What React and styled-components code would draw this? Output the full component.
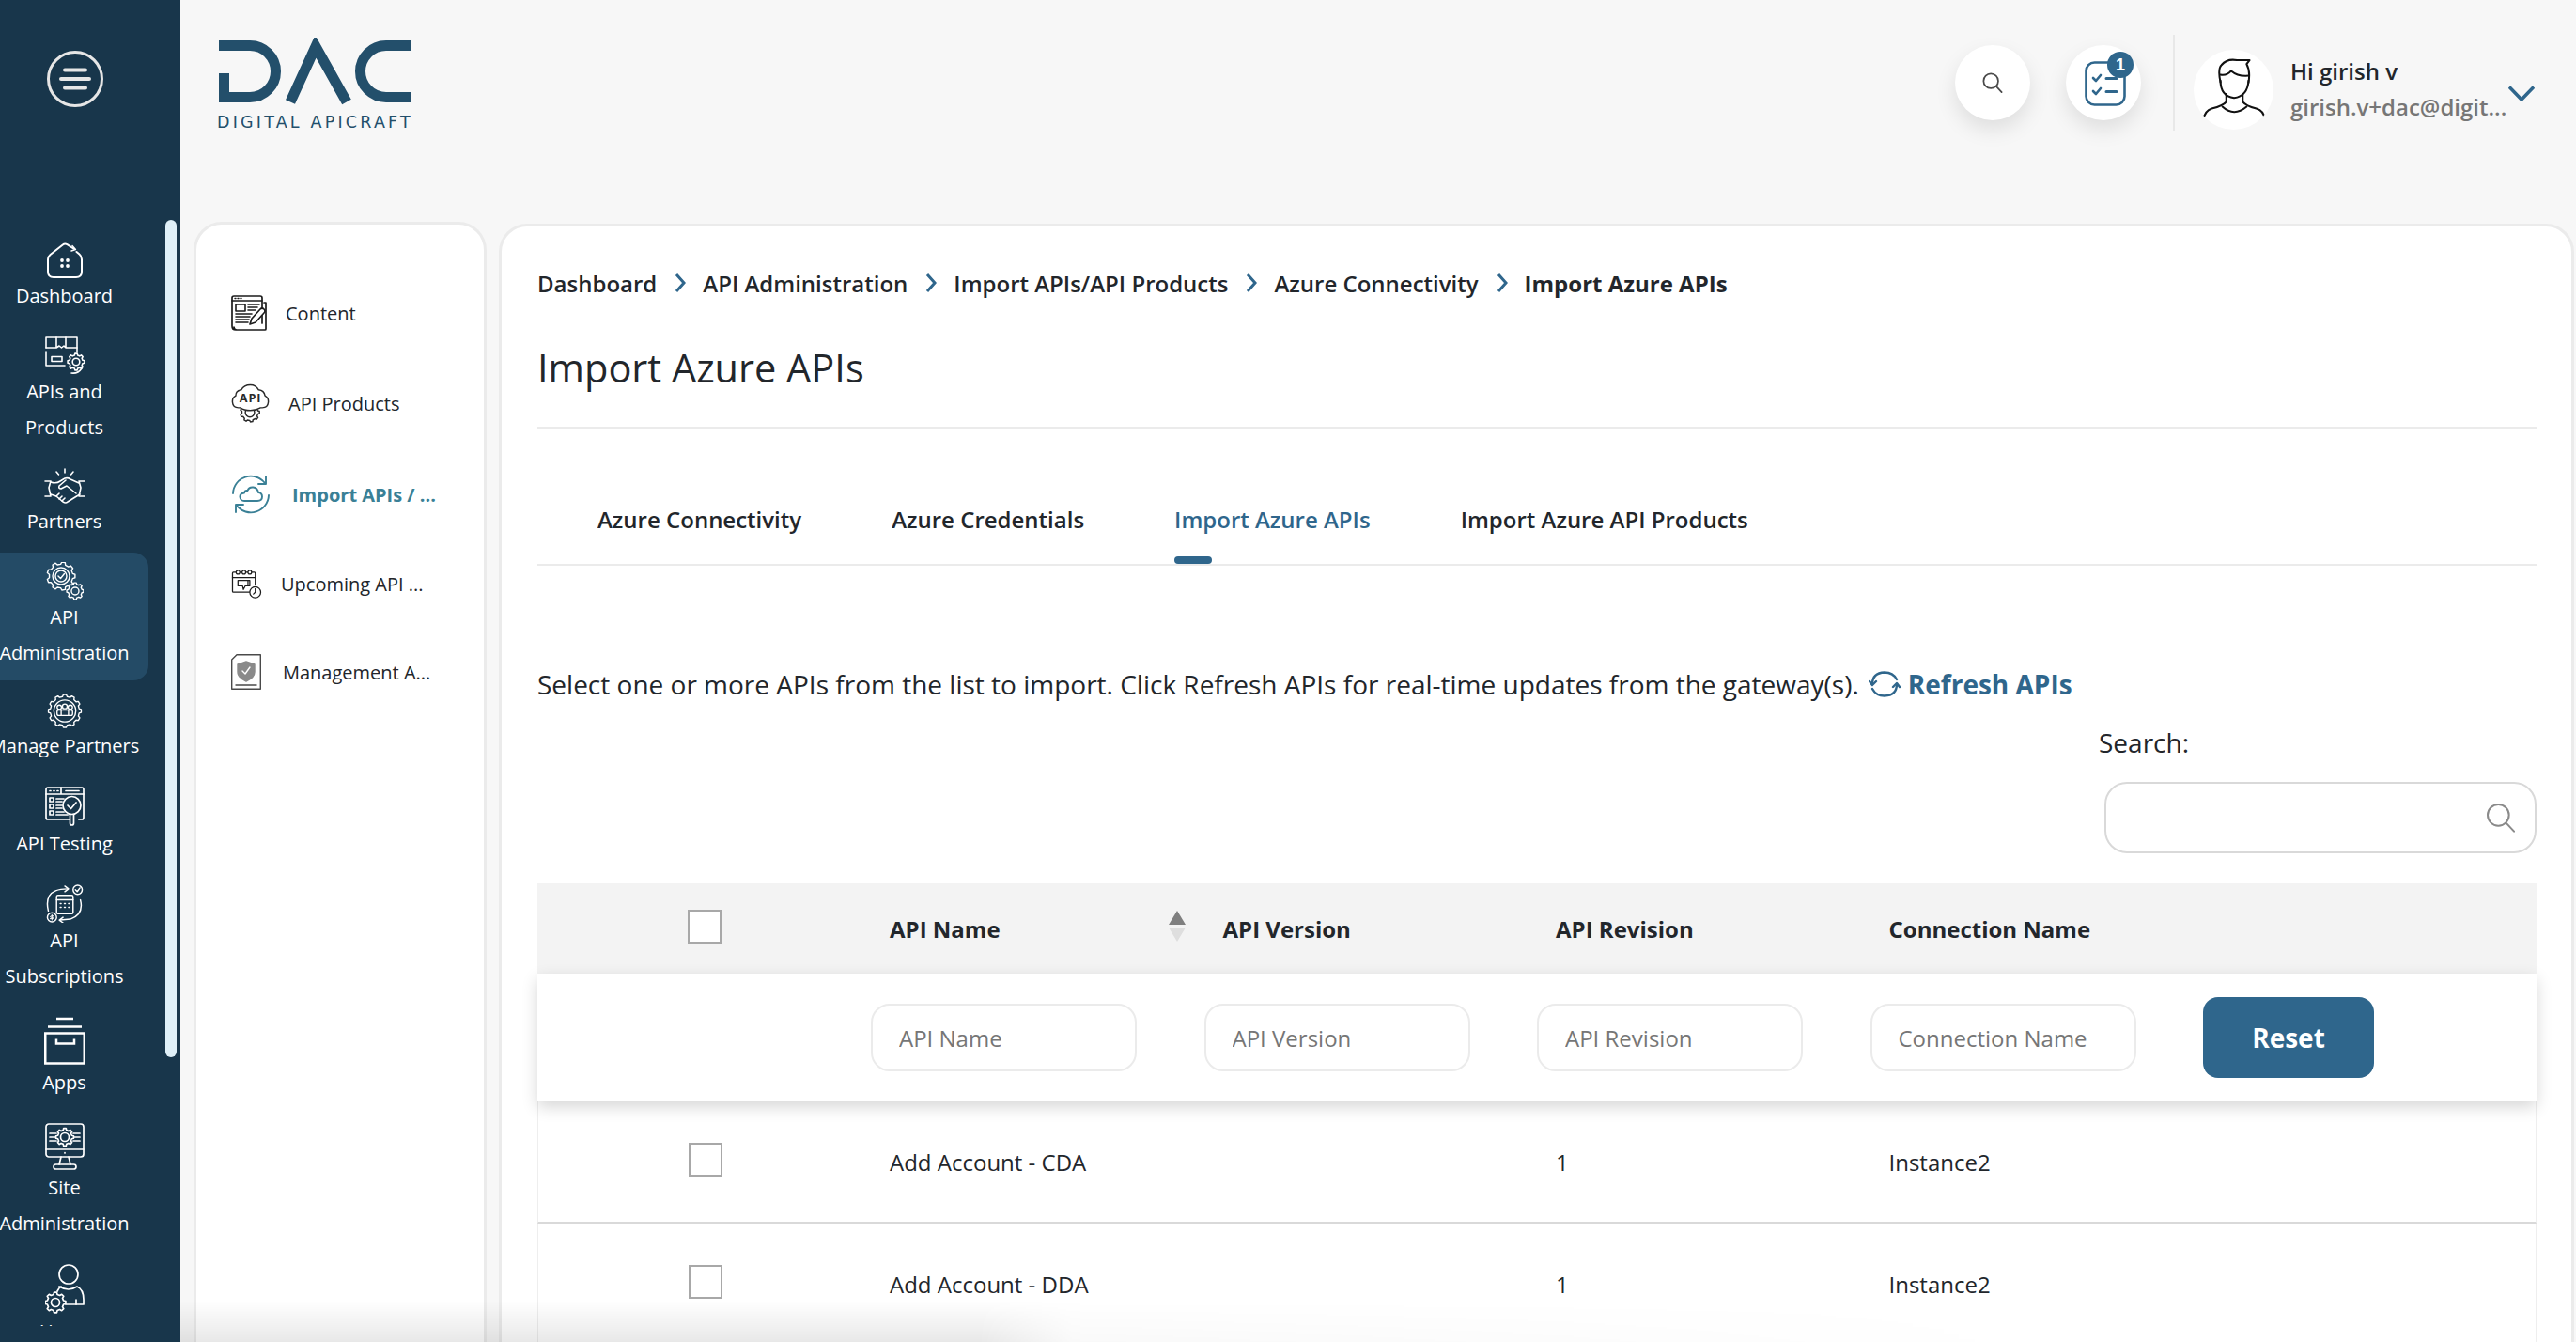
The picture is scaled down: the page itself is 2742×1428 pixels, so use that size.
import React from "react";
import styled, { createGlobalStyle } from "styled-components";

const COLORS = {
  navy: "#18364b",
  navyActive: "#244b66",
  blue: "#2f668c",
  teal: "#3a8096",
  logo: "#234f6b",
  text: "#22262b",
  grey: "#767676",
  line: "#ebebeb",
};

const GlobalStyle = createGlobalStyle`
  * {
    box-sizing: border-box;
  }

  html,
  body {
    margin: 0;
    padding: 0;
    background: #f7f7f7;
    font-family: "Open Sans", "Noto Sans", sans-serif;
    color: ${COLORS.text};
  }
`;

const Page = styled.div`
  position: relative;
  display: flex;
  width: 2742px;
  height: 1428px;
  overflow: hidden;
  background: #f7f7f7;
`;

const Sidebar = styled.aside`
  position: relative;
  flex: 0 0 192px;
  display: flex;
  flex-direction: column;
  padding-top: 54px;
  background: ${COLORS.navy};
`;

const MenuButton = styled.button`
  align-self: flex-start;
  width: 60px;
  height: 60px;
  margin: 0 0 120px 50px;
  padding: 0;
  border: 0;
  background: none;
`;

const ScrollThumb = styled.div`
  position: absolute;
  top: 234px;
  left: 176px;
  width: 12px;
  height: 891px;
  border-radius: 6px;
  background: #dff0f8;
`;

const NavList = styled.nav`
  display: flex;
  flex-direction: column;
  gap: 4px;
  height: 1177px;
  padding-top: 14px;
  overflow: hidden;
`;

const NavItem = styled.a`
  flex: 0 0 auto;
  display: flex;
  flex-direction: column;
  align-items: center;
  width: 158px;
  padding: 10px 21px 10px 0;
  border-radius: 0 16px 16px 0;
  background: ${(props) => (props.$active ? COLORS.navyActive : "transparent")};
  color: #fff;

  svg {
    display: block;
    flex: 0 0 auto;
  }
`;

const NavLabel = styled.span`
  font-size: 20px;
  line-height: 38px;
  text-align: center;
  white-space: nowrap;
`;

const Main = styled.div`
  flex: 1;
  min-width: 0;
  display: flex;
  flex-direction: column;
`;

const Header = styled.header`
  flex: 0 0 236px;
  display: flex;
  justify-content: space-between;
  align-items: flex-start;
  padding: 40px 44px 0 39px;
`;

const Logo = styled.div`
  display: flex;
  flex-direction: column;
  width: 210px;
`;

const LogoName = styled.span`
  margin-top: 8px;
  font-family: "DejaVu Sans", "Open Sans", sans-serif;
  font-size: 17.5px;
  line-height: 20px;
  letter-spacing: 3.2px;
  white-space: nowrap;
  color: ${COLORS.logo};
`;

const HeaderRight = styled.div`
  display: flex;
  align-items: center;
  height: 102px;
  margin-top: -3px;
`;

const RoundButton = styled.button`
  position: relative;
  display: flex;
  align-items: center;
  justify-content: center;
  width: 80px;
  height: 80px;
  margin-right: ${(props) => props.$gap}px;
  padding: 0;
  border: 0;
  border-radius: 50%;
  background: #fff;
  box-shadow: 0 10px 22px rgba(0, 0, 0, 0.1);
`;

const Badge = styled.span`
  position: absolute;
  top: 7px;
  right: 8px;
  width: 28px;
  height: 28px;
  border-radius: 50%;
  background: ${COLORS.blue};
  color: #fff;
  font-size: 18px;
  line-height: 28px;
  font-weight: 700;
  text-align: center;
`;

const HeaderDivider = styled.div`
  width: 2px;
  height: 102px;
  margin-right: 20px;
  background: #e8e8e8;
`;

const UserBlock = styled.div`
  display: flex;
  align-items: center;
  margin-top: 14px;
`;

const Avatar = styled.div`
  display: flex;
  align-items: center;
  justify-content: center;
  width: 85px;
  height: 85px;
  margin-right: 18px;
  border-radius: 50%;
  background: #fff;
  overflow: hidden;
`;

const UserText = styled.div`
  width: 232px;
`;

const UserName = styled.div`
  font-size: 24px;
  line-height: 38px;
  font-weight: 600;
`;

const UserEmail = styled.div`
  font-size: 24px;
  line-height: 38px;
  font-weight: 600;
  color: ${COLORS.grey};
  white-space: nowrap;
`;

const Chevron = styled.svg`
  margin-top: 8px;
`;

const Body = styled.div`
  flex: 1;
  min-height: 0;
  display: flex;
  align-items: flex-start;
  gap: 13px;
  padding: 0 2px 0 14px;
`;

const SidePanel = styled.div`
  flex: 0 0 312px;
  display: flex;
  flex-direction: column;
  height: 100%;
  padding: 47px 0 0 37px;
  background: #fff;
  border: 3px solid ${COLORS.line};
  border-bottom: 0;
  border-radius: 30px 30px 0 0;
`;

const SideItem = styled.a`
  display: flex;
  align-items: center;
  gap: ${(props) => props.$gap}px;
  height: ${(props) => props.$height}px;
  font-size: 20px;
  font-weight: ${(props) => (props.$active ? 700 : 400)};
  color: ${(props) => (props.$active ? COLORS.teal : COLORS.text)};
  white-space: nowrap;

  svg {
    flex: 0 0 auto;
  }
`;

const Content = styled.section`
  flex: 1;
  min-width: 0;
  height: calc(100% - 2px);
  margin-top: 2px;
  padding: 42px 37px 0 38px;
  background: #fff;
  border: 3px solid ${COLORS.line};
  border-bottom: 0;
  border-radius: 30px 30px 0 0;
`;

const Breadcrumb = styled.div`
  display: flex;
  align-items: center;
  height: 36px;
  font-size: 24px;
  white-space: nowrap;
`;

const Crumb = styled.span`
  font-weight: ${(props) => (props.$current ? 700 : 600)};
`;

const CrumbArrow = styled.svg`
  margin: 0 18px 0 19px;
`;

const Title = styled.h1`
  margin: 45px 0 0;
  padding-bottom: 36px;
  border-bottom: 2px solid ${COLORS.line};
  font-size: 41.5px;
  line-height: 54px;
  font-weight: 500;
`;

const Tabs = styled.div`
  display: flex;
  height: 146px;
  padding: 80px 0 0 16px;
  border-bottom: 2px solid ${COLORS.line};
`;

const Tab = styled.a`
  position: relative;
  height: 64px;
  padding: 0 48px;
  font-size: 24px;
  line-height: 34px;
  font-weight: 600;
  white-space: nowrap;
  color: ${(props) => (props.$active ? COLORS.blue : COLORS.text)};

  &::after {
    content: "";
    display: ${(props) => (props.$active ? "block" : "none")};
    position: absolute;
    left: 48px;
    bottom: 0;
    width: 40px;
    height: 8px;
    border-radius: 4px;
    background: ${COLORS.blue};
  }
`;

const Intro = styled.div`
  display: flex;
  align-items: center;
  height: 40px;
  margin-top: 106px;
  font-size: 28px;
  white-space: nowrap;
`;

const RefreshLink = styled.a`
  display: flex;
  align-items: center;
  gap: 8px;
  margin-left: 10px;
  font-weight: 700;
  color: ${COLORS.blue};
`;

const SearchBlock = styled.div`
  display: flex;
  flex-direction: column;
  width: 466px;
  margin: 22px 0 0 auto;
`;

const SearchLabel = styled.label`
  font-size: 28px;
  line-height: 40px;
`;

const SearchBox = styled.div`
  display: flex;
  align-items: center;
  justify-content: flex-end;
  align-self: flex-end;
  width: 460px;
  height: 76px;
  margin-top: 22px;
  padding-right: 20px;
  border: 2px solid #d9d9d9;
  border-radius: 24px;
`;

const Table = styled.div`
  margin-top: 32px;
`;

const GRID = "355px repeat(4, 354.5px) 1fr";

const HeadRow = styled.div`
  display: grid;
  grid-template-columns: ${GRID};
  align-items: center;
  height: 96px;
  background: #f3f3f3;
`;

const FilterRow = styled.div`
  position: relative;
  z-index: 1;
  display: grid;
  grid-template-columns: ${GRID};
  align-items: center;
  height: 136px;
  background: #fff;
  box-shadow: 0 6px 16px rgba(0, 0, 0, 0.16);
`;

const DataRow = styled.div`
  display: grid;
  grid-template-columns: ${GRID};
  align-items: center;
  height: 130px;
  border: solid #eeeeee;
  border-width: 0 1px;
  border-bottom: 2px solid #d9d9d9;
`;

const HeadCell = styled.div`
  display: flex;
  justify-content: space-between;
  align-items: center;
  padding: 0 20px;
  font-size: 24px;
  font-weight: 700;
  white-space: nowrap;
`;

const DataCell = styled.div`
  padding-left: 19px;
  font-size: 24px;
  white-space: nowrap;
`;

const CheckBox = styled.input.attrs({ type: "checkbox" })`
  appearance: none;
  display: block;
  width: 36px;
  height: 36px;
  margin: 0 0 5px 160px;
  border: 2px solid #a8a8a8;
  background: #fff;
`;

const SortArrows = styled.span`
  display: flex;
  flex-direction: column;
  gap: 3px;
  margin-top: -6px;

  &::before,
  &::after {
    content: "";
    border-left: 9px solid transparent;
    border-right: 9px solid transparent;
  }

  &::before {
    border-bottom: 15px solid #7f7f7f;
  }

  &::after {
    border-top: 15px solid #dedede;
  }
`;

const FilterInput = styled.input`
  display: block;
  width: 283px;
  height: 72px;
  padding: 0 0 0 28px;
  border: 2px solid ${COLORS.line};
  border-radius: 20px;
  outline: 0;
  background: #fff;
  font-family: inherit;
  font-size: 24px;

  &::placeholder {
    color: ${COLORS.grey};
    opacity: 1;
  }
`;

const ResetButton = styled.button`
  width: 182px;
  height: 86px;
  border: 0;
  border-radius: 16px;
  background: ${COLORS.blue};
  color: #fff;
  font-family: inherit;
  font-size: 28px;
  font-weight: 700;
`;

const BottomFade = styled.div`
  position: absolute;
  left: 192px;
  right: 0;
  bottom: 0;
  z-index: 2;
  height: 44px;
  background: linear-gradient(to top, rgba(0, 0, 0, 0.09), rgba(0, 0, 0, 0));
  mask-image: linear-gradient(to right, #000 850px, rgba(0, 0, 0, 0.25) 950px, transparent 2000px);
  pointer-events: none;
`;

// builds a cog outline, used by most of the menu icons
const gearPath = (cx, cy, r, teeth = 8, depth = 0.2) => {
  const inner = r * (1 - depth);
  const step = (Math.PI * 2) / teeth;
  const points = [];
  for (let i = 0; i < teeth; i += 1) {
    const a = i * step;
    [
      [-0.3, inner],
      [-0.17, r],
      [0.17, r],
      [0.3, inner],
    ].forEach(([offset, radius]) => {
      const angle = a + offset * step;
      points.push(`${(cx + radius * Math.cos(angle)).toFixed(2)} ${(cy + radius * Math.sin(angle)).toFixed(2)}`);
    });
  }
  return `M${points.join("L")}Z`;
};

const Line = styled.svg`
  fill: none;
  stroke: ${(props) => props.$color || "#fff"};
  stroke-width: ${(props) => props.$weight || 1.6};
  stroke-linecap: round;
  stroke-linejoin: round;
`;

const TaskGlyph = styled(Line)`
  margin: 2px 0 0 3px;
`;

const MenuIcon = () => (
  <Line viewBox="0 0 60 60" width="60" height="60" $color="#e6e6e6" $weight="3">
    <circle cx="30" cy="30" r="28.5" />
    <path d="M19 20.5H41" strokeWidth="4" />
    <path d="M15 30H45" strokeWidth="4" />
    <path d="M19 39.5H41" strokeWidth="4" />
  </Line>
);

const DashboardIcon = () => (
  <Line viewBox="0 0 38 38" width="38" height="38" $weight="2">
    <path d="M29 7L21.5 2.2Q19 .8 16.8 2.6L3.5 13Q1 15 1 18V31Q1 37 7 37H31Q37 37 37 31V18Q37 14.500 34.500 12.500L31.500 10" />
    <path d="M27 3.500L30.500 7.500L26 9" strokeWidth="1.4" />
    <g fill="#fff" stroke="none">
      <circle cx="16" cy="19" r="1.9" />
      <circle cx="22" cy="19" r="1.9" />
      <circle cx="16" cy="25" r="1.9" />
      <circle cx="22" cy="25" r="1.9" />
    </g>
  </Line>
);

const ApisIcon = () => (
  <Line viewBox="0 0 42 40" width="42" height="40">
    <path d="M1 12V1H34V17" />
    <path d="M1 12H12V1M12 12L15 10L17.500 12L20 10L22 12V1M22 12H34" />
    <path d="M1 17V31H21" />
    <rect x="7" y="21.500" width="11" height="5" />
    <path d={gearPath(33, 27, 9, 8)} />
    <circle cx="33" cy="27" r="3.800" />
    <path d="M39 34Q35 40 28 39" />
  </Line>
);

const PartnersIcon = () => (
  <Line viewBox="0 0 44 38" width="44" height="38">
    <path d="M22 1V5M13 4L15.500 7M31 4L28.500 7" />
    <path d="M7 14H1M7 14L5 21L7 30H1M37 14H43M37 14L39 21L37 30H43" />
    <path d="M7 15Q13 17 17 14L22 11Q25 10 28 12L37 16" />
    <path d="M7 28L13 30L20 36Q23 38 25 36L33 31L38 28" />
    <path d="M23 13L16 19Q15 22 18 22L24 19L34 27" />
    <path d="M13 30L16 27M16 33L19 30M19 35L22 32" />
  </Line>
);

const ApiAdminIcon = () => (
  <Line viewBox="0 0 40 40" width="40" height="40" $weight="1.400">
    <path d={gearPath(16, 15, 15, 9, 0.16)} />
    <circle cx="16" cy="15" r="9" />
    <circle cx="16" cy="15" r="6" />
    <path d="M13 15L15.500 17.500L19.500 12.500" />
    <path d={gearPath(31, 31, 9, 8, 0.18)} fill={COLORS.navyActive} />
    <circle cx="31" cy="31" r="4" />
  </Line>
);

const ManagePartnersIcon = () => (
  <Line viewBox="0 0 38 38" width="38" height="37" $weight="1.400">
    <path d={gearPath(19, 19, 18, 12, 0.12)} />
    <circle cx="19" cy="19" r="12" />
    <circle cx="13" cy="15" r="2.400" />
    <circle cx="19" cy="14" r="2.600" />
    <circle cx="25" cy="15" r="2.400" />
    <rect x="10.500" y="18" width="17" height="6" rx="2" />
    <path d="M15 18V24M23 18V24" />
  </Line>
);

const ApiTestingIcon = () => (
  <Line viewBox="0 0 42 42" width="42" height="42" $weight="1.700">
    <path d="M26 35H3Q1 35 1 33V3Q1 1 3 1H39Q41 1 41 3V33Q41 35 39 35H36" />
    <path d="M1 8H41M17 1V8M22 4.500H36M5 4.500H6M9 4.500H10M13 4.500H14" />
    <rect x="5" y="12" width="4" height="4" />
    <rect x="5" y="19" width="4" height="4" />
    <rect x="5" y="26" width="4" height="4" />
    <path d="M12 13H20M12 16H18M12 20H18M12 23H18M12 27H20M12 30H24" />
    <circle cx="28.500" cy="20" r="9.500" />
    <path d="M24 20L27.500 23.500L33 17" />
    <path d="M26.500 30V39Q26.500 41 28.500 41T30.500 39V30" />
  </Line>
);

const SubscriptionsIcon = () => (
  <Line viewBox="0 0 40 42" width="40" height="41" $weight="1.500">
    <path d="M2 29Q-2 12 10 7Q15 5 23 5" />
    <path d="M20 2L24 5L20 8" />
    <path d="M37 17Q41 33 26 38L15 39" />
    <path d="M18 36L14 39L18 42" />
    <circle cx="34" cy="6" r="5" />
    <path d="M31.500 6L33.500 8L36.500 4" />
    <circle cx="6" cy="36" r="5" />
    <path d="M6 33V39M8 34.500H5Q4 34.500 4.500 36H7.500Q8.500 37.500 7 37.500H4" strokeWidth="1" />
    <rect x="11" y="12" width="18" height="20" rx="1.500" />
    <path d="M11 17H29M15 21H16M19.500 21H20.500M24 21H25M15 25H16M19.500 25H20.500M24 25H25" />
  </Line>
);

const AppsIcon = () => (
  <Line viewBox="0 0 44 50" width="44" height="51" $weight="2.500">
    <path d="M13 1.500H31M4 10H40" strokeLinecap="butt" />
    <rect x="1.250" y="17" width="41.500" height="32" strokeLinejoin="miter" />
    <path d="M13 23V28H32V23" strokeLinecap="butt" strokeLinejoin="miter" />
  </Line>
);

const SiteAdminIcon = () => (
  <Line viewBox="0 0 42 50" width="42" height="50" $weight="1.700">
    <rect x="1" y="1" width="40" height="35" rx="3" />
    <path d="M1 28H41M21 31.500V32" />
    <path d="M17 36L15 44M25 36L27 44" />
    <rect x="9" y="44" width="24" height="5" rx="2.500" />
    <path d={gearPath(21, 15, 9.500, 8, 0.2)} />
    <circle cx="21" cy="15" r="4.500" />
    <path d="M5 11H12M5 15H11M5 19H12M30 11H37M31 15H37M30 19H37" />
  </Line>
);

const UsersIcon = () => (
  <Line viewBox="0 0 42 53" width="42" height="53" $weight="1.700">
    <circle cx="25" cy="11" r="10" />
    <path d="M15 24Q25 30 34 24Q41 27 41 38V43H22" />
    <path d="M13 29Q15 25 17 24" />
    <path d={gearPath(11, 41, 11, 8, 0.2)} />
    <circle cx="11" cy="41" r="4.500" />
    <path d="M33 38V43" />
  </Line>
);

const ContentIcon = () => (
  <Line viewBox="0 0 38 38" width="38" height="38" $color="#1d1d1d" $weight="1.400">
    <path d="M3 1H31Q33 1 33 3V30M35 8H37V36Q37 37 36 37H6Q3 37 3 34M3 1Q1 1 1 3V33Q1 37 5 37" strokeWidth="1.700" />
    <path d="M1 6H33M4 3.500H5M7 3.500H8M10 3.500H11" />
    <rect x="5" y="10" width="10" height="7" strokeWidth="1.600" />
    <path d="M18 10H30M18 13H28M18 16H26M5 20H22M5 23H20M5 26H19M5 29H18" strokeWidth="1.600" />
    <path d="M20 31L22 25L31 15Q33 13 35 15Q37 17 35 19L26 29Z" fill="#fff" strokeWidth="1.700" />
  </Line>
);

const ApiProductsIcon = () => (
  <Line viewBox="0 0 42 42" width="41" height="42" $color="#2a2a2a" $weight="1.500">
    <path d={gearPath(20.500, 31, 10.500, 9, 0.16)} />
    <circle cx="20.500" cy="31" r="5" />
    <path d="M10 26H8Q2 26 1.500 20Q1 15 5 13Q5 7 11 6.500Q14 1 21 1Q27 1 30 6.500Q36 7 37 13Q41 15 40.500 20Q40 26 34 26H32Q27 29 21 29Q14 29 10 26Z" fill="#fff" />
    <text x="21" y="20" fontSize="13" fontWeight="700" fill="#2a2a2a" stroke="none" textAnchor="middle" letterSpacing="0.800">API</text>
  </Line>
);

const ImportIcon = () => (
  <Line viewBox="0 0 42 42" width="42" height="42" $color={COLORS.teal} $weight="1.900">
    <path d="M2 20A19 19 0 0 1 36 9" />
    <path d="M37 2V10H29" />
    <path d="M40 22A19 19 0 0 1 6 33" />
    <path d="M5 40V32H13" />
    <path d="M14 28H28Q33 28 33 23.500Q33 19.500 29 19Q28 14 23.500 13.500Q19 13 17.500 17Q14.500 16.500 14 19.500Q9 20 9.500 24Q10 28 14 28Z" />
  </Line>
);

const UpcomingIcon = () => (
  <Line viewBox="0 0 33 32" width="33" height="31" $color="#1d1d1d" $weight="1.300">
    <path d="M20 25H2Q1 25 1 24V4Q1 3 2 3H25Q26 3 26 4V17" />
    <path d="M1 9H26" />
    <circle cx="7" cy="3" r="2" fill="#fff" />
    <circle cx="13.500" cy="3" r="2" fill="#fff" />
    <circle cx="20" cy="3" r="2" fill="#fff" />
    <path d="M7 12H20V18H15L13 22L12 18H7Z" />
    <path d="M18 12V18" />
    <circle cx="26" cy="25" r="6" fill="#fff" />
    <path d="M26 21V25L24 27" />
  </Line>
);

const ManagementIcon = () => (
  <Line viewBox="0 0 32 38" width="32" height="38" $color="#4a4a4a" $weight="1.400">
    <path d="M6 .7H31.300V37.300H.7V6Z" />
    <path d="M16 8L25 11V19Q25 25 16 29Q7 25 7 19V11Z" fill="#8a8a8a" stroke="#8a8a8a" />
    <path d="M12 18L15 21L20 14" stroke="#fff" />
    <path d="M5 33H27" />
  </Line>
);

const SearchGlyph = ({ size, color, weight }) => (
  <Line viewBox="0 0 24 24" width={size} height={size} $color={color} $weight={weight}>
    <circle cx="10" cy="10" r="8.500" />
    <path d="M16.200 16.200L22.500 23" />
  </Line>
);

const TaskIcon = () => (
  <TaskGlyph viewBox="0 0 44 48" width="44" height="48" $color={COLORS.blue} $weight="2.600">
    <rect x="1.500" y="1.500" width="41" height="45" rx="9" />
    <path d="M9 18L12 21L17 15M9 32L12 35L17 29" />
    <path d="M23 18.500H34M23 32.500H34" strokeWidth="3" />
  </TaskGlyph>
);

const AvatarIcon = () => (
  <Line viewBox="0 0 66 66" width="68" height="68" $color="#111" $weight="2">
    <path d="M19 26Q16 12 20 8Q26 1 36 3L49 3L46 7Q50 14 48 26" />
    <path d="M19 18Q26 19 30 14Q37 20 48 19" />
    <path d="M19 24Q19 40 33 42Q47 40 48 24" />
    <path d="M25 38V46Q22 50 10 53Q3 55 1 65M42 38V46Q45 50 56 53Q64 55 65 65" />
    <path d="M21 51Q33 62 46 51" />
  </Line>
);

const RefreshIcon = () => (
  <Line viewBox="0 0 34 30" width="34" height="30" $color={COLORS.blue} $weight="2.400">
    <path d="M4 15Q4 3 17 2.500Q26 2.500 30 10" />
    <path d="M30 15Q30 27 17 27.500Q8 27.500 4 20" />
    <path d="M1 12L4 16L8 12M26 18L30 14L33 18" />
  </Line>
);

const DacMark = () => (
  <svg viewBox="0 0 210 72" width="210" height="72" fill="none" stroke={COLORS.logo} strokeWidth="11">
    <path d="M2 8.500H35A27.500 27.500 0 0 1 35 63.500H7.500V38" />
    <polyline points="78,72 105,13 138,72" strokeMiterlimit="6" transform="translate(0 -3.500)" />
    <path d="M207 8.500H180A27.500 27.500 0 0 0 180 63.500H207" />
  </svg>
);

const NAV_ITEMS = [
  { icon: DashboardIcon, lines: ["Dashboard"] },
  { icon: ApisIcon, lines: ["APIs and", "Products"] },
  { icon: PartnersIcon, lines: ["Partners"] },
  { icon: ApiAdminIcon, lines: ["API", "Administration"], active: true },
  { icon: ManagePartnersIcon, lines: ["Manage Partners"] },
  { icon: ApiTestingIcon, lines: ["API Testing"] },
  { icon: SubscriptionsIcon, lines: ["API", "Subscriptions"] },
  { icon: AppsIcon, lines: ["Apps"] },
  { icon: SiteAdminIcon, lines: ["Site", "Administration"] },
  { icon: UsersIcon, lines: ["Users"] },
];

const SIDE_ITEMS = [
  { icon: ContentIcon, label: "Content", gap: 20, height: 94 },
  { icon: ApiProductsIcon, label: "API Products", gap: 20, height: 98 },
  { icon: ImportIcon, label: "Import APIs / ...", gap: 23, height: 96, active: true },
  { icon: UpcomingIcon, label: "Upcoming API ...", gap: 20, height: 94 },
  { icon: ManagementIcon, label: "Management A...", gap: 23, height: 94 },
];

const CRUMBS = ["Dashboard", "API Administration", "Import APIs/API Products", "Azure Connectivity"];
const TABS = ["Azure Connectivity", "Azure Credentials", "Import Azure APIs", "Import Azure API Products"];
const COLUMNS = ["API Name", "API Version", "API Revision", "Connection Name"];
const ROWS = [
  { name: "Add Account - CDA", revision: "1", connection: "Instance2" },
  { name: "Add Account - DDA", revision: "1", connection: "Instance2" },
];

const App = () => {
  return (
    <Page>
      <GlobalStyle />
      <Sidebar>
        <MenuButton aria-label="menu">
          <MenuIcon />
        </MenuButton>
        <NavList>
          {NAV_ITEMS.map(({ icon: Icon, lines, active }) => (
            <NavItem key={lines.join(" ")} $active={active}>
              <Icon />
              {lines.map((line) => (
                <NavLabel key={line}>{line}</NavLabel>
              ))}
            </NavItem>
          ))}
        </NavList>
        <ScrollThumb />
      </Sidebar>
      <Main>
        <Header>
          <Logo>
            <DacMark />
            <LogoName>DIGITAL APICRAFT</LogoName>
          </Logo>
          <HeaderRight>
            <RoundButton $gap={38} aria-label="search">
              <SearchGlyph size={22} color="#4a4a4a" weight={1.9} />
            </RoundButton>
            <RoundButton $gap={34} aria-label="tasks">
              <TaskIcon />
              <Badge>1</Badge>
            </RoundButton>
            <HeaderDivider />
            <UserBlock>
              <Avatar>
                <AvatarIcon />
              </Avatar>
              <UserText>
                <UserName>Hi girish v</UserName>
                <UserEmail>girish.v+dac@digit...</UserEmail>
              </UserText>
              <Chevron viewBox="0 0 28 17" width="28" height="17" fill="none" stroke={COLORS.blue} strokeWidth="3.500">
                <path d="M1 1.500L14 15L27 1.500" />
              </Chevron>
            </UserBlock>
          </HeaderRight>
        </Header>
        <Body>
          <SidePanel>
            {SIDE_ITEMS.map(({ icon: Icon, label, gap, height, active }) => (
              <SideItem key={label} $gap={gap} $height={height} $active={active}>
                <Icon />
                {label}
              </SideItem>
            ))}
          </SidePanel>
          <Content>
            <Breadcrumb>
              {CRUMBS.map((crumb) => (
                <React.Fragment key={crumb}>
                  <Crumb>{crumb}</Crumb>
                  <CrumbArrow viewBox="0 0 12 22" width="12" height="22" fill="none" stroke={COLORS.blue} strokeWidth="3">
                    <path d="M2 2L10 11L2 20" />
                  </CrumbArrow>
                </React.Fragment>
              ))}
              <Crumb $current>Import Azure APIs</Crumb>
            </Breadcrumb>
            <Title>Import Azure APIs</Title>
            <Tabs>
              {TABS.map((tab) => (
                <Tab key={tab} $active={tab === "Import Azure APIs"}>
                  {tab}
                </Tab>
              ))}
            </Tabs>
            <Intro>
              Select one or more APIs from the list to import. Click Refresh APIs for real-time updates from the gateway(s).
              <RefreshLink>
                <RefreshIcon />
                Refresh APIs
              </RefreshLink>
            </Intro>
            <SearchBlock>
              <SearchLabel>Search:</SearchLabel>
              <SearchBox>
                <SearchGlyph size={32} color="#8a8a8a" weight={1.500} />
              </SearchBox>
            </SearchBlock>
            <Table>
              <HeadRow>
                <CheckBox aria-label="select all" />
                {COLUMNS.map((column, index) => (
                  <HeadCell key={column}>
                    {column}
                    {index === 0 && <SortArrows />}
                  </HeadCell>
                ))}
              </HeadRow>
              <FilterRow>
                <span />
                {COLUMNS.map((column) => (
                  <FilterInput key={column} placeholder={column} />
                ))}
                <ResetButton>Reset</ResetButton>
              </FilterRow>
              {ROWS.map((row) => (
                <DataRow key={row.name}>
                  <CheckBox aria-label={row.name} />
                  <DataCell>{row.name}</DataCell>
                  <DataCell />
                  <DataCell>{row.revision}</DataCell>
                  <DataCell>{row.connection}</DataCell>
                </DataRow>
              ))}
            </Table>
          </Content>
        </Body>
      </Main>
      <BottomFade />
    </Page>
  );
};

export default App;
